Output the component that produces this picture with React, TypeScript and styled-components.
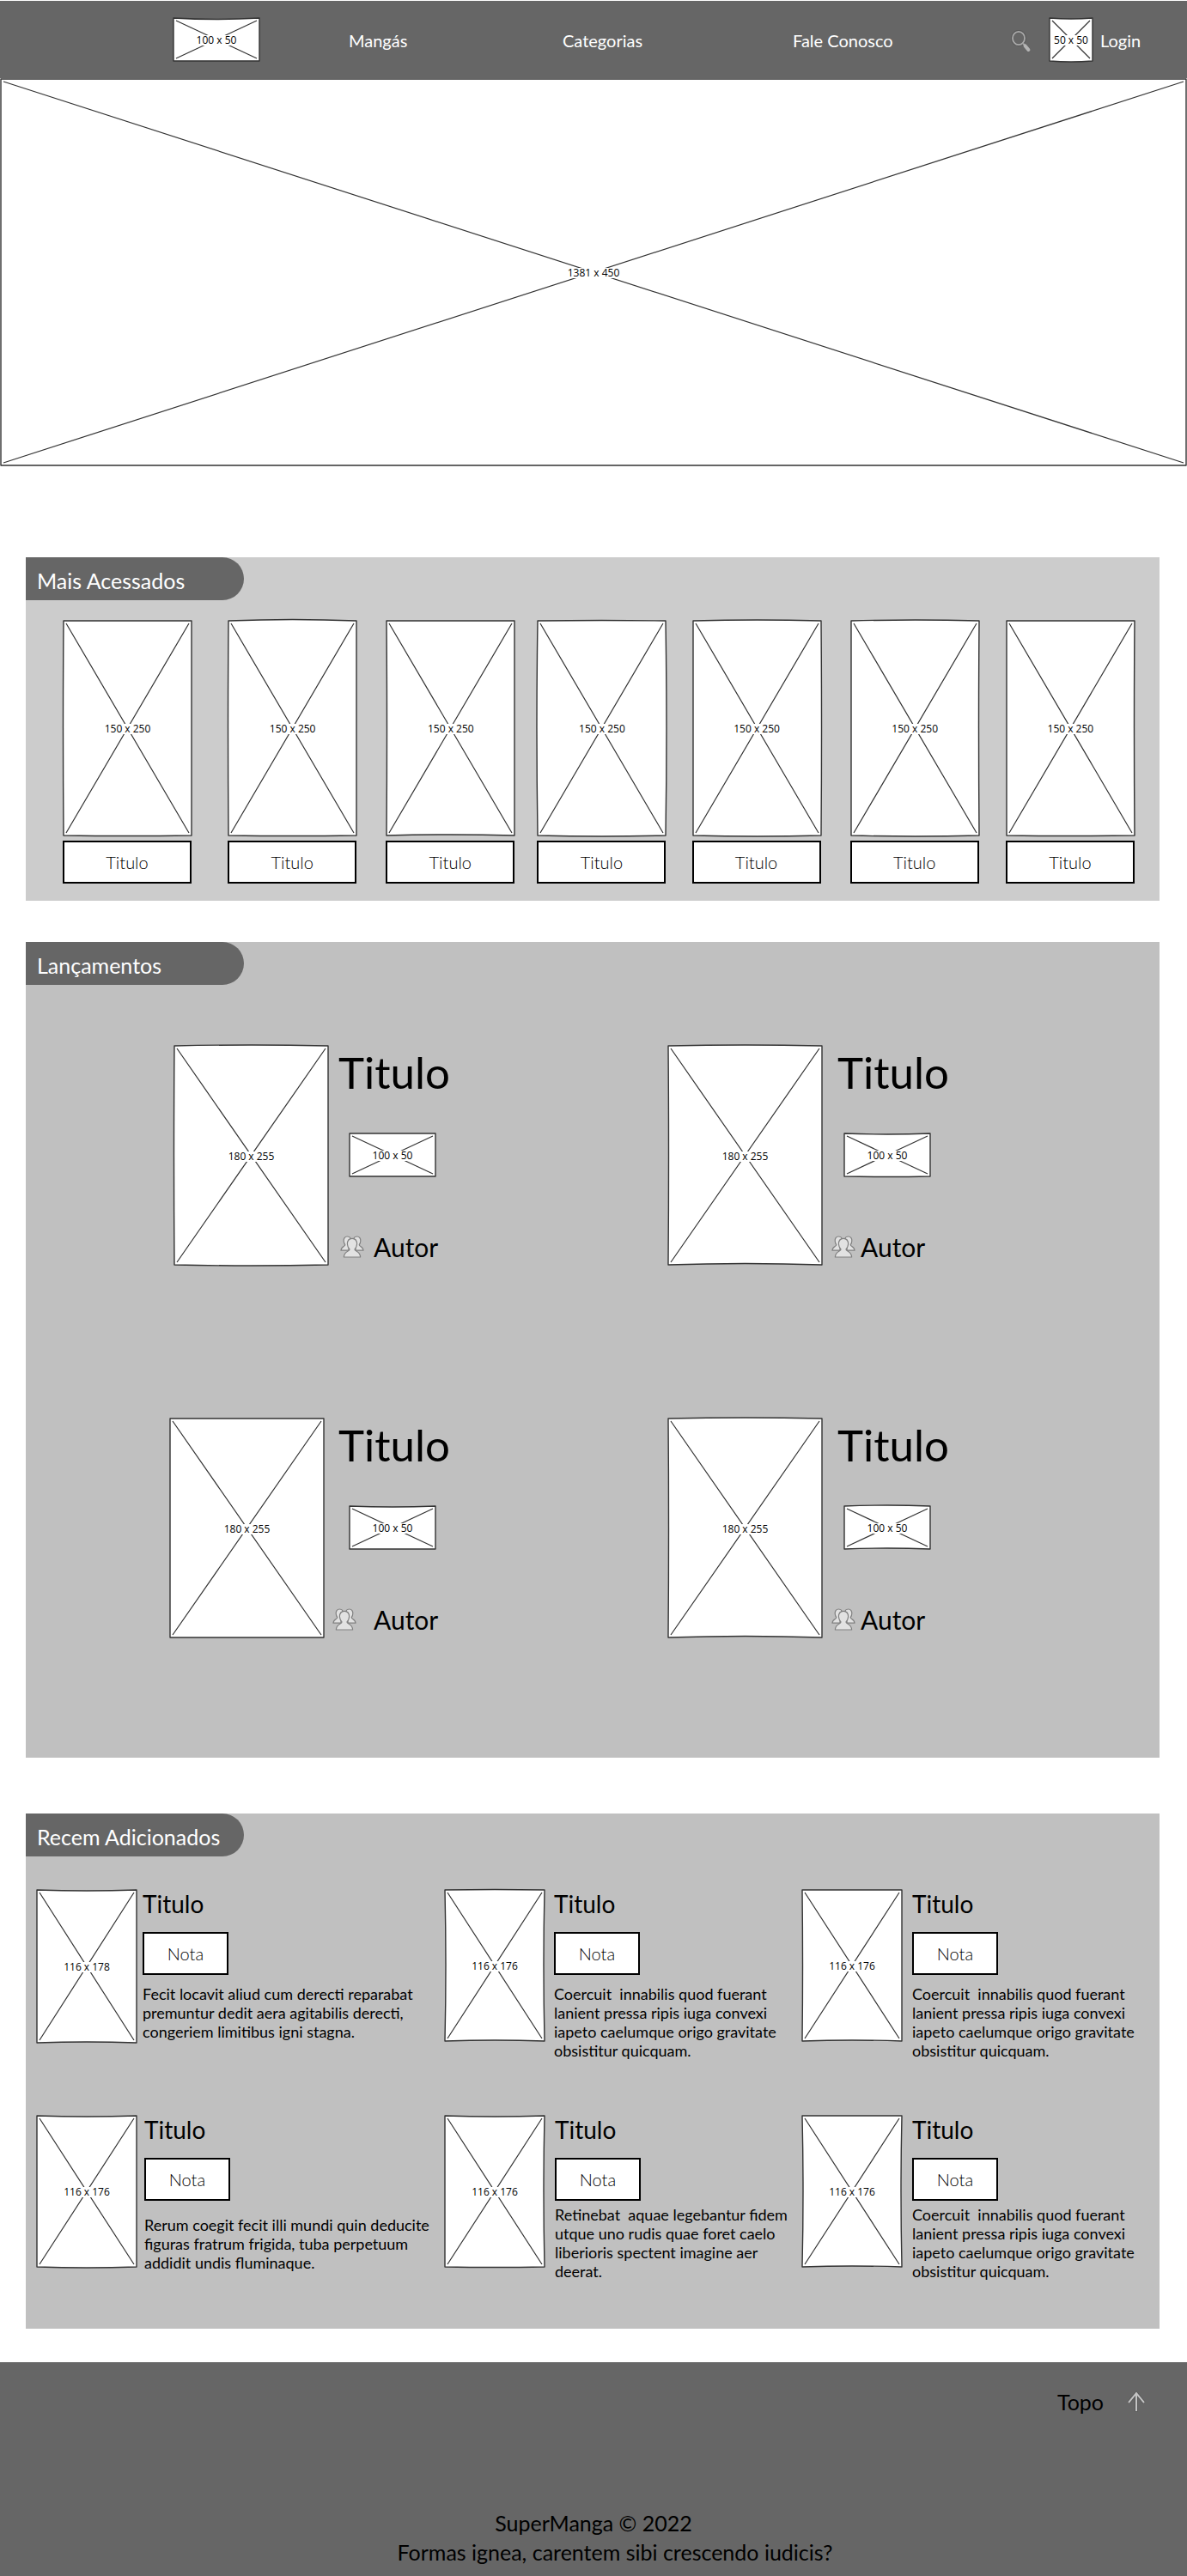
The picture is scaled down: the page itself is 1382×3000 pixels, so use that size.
import React from "react";
import styled, { createGlobalStyle } from "styled-components";

const GlobalStyle = createGlobalStyle`
  *, *::before, *::after { box-sizing: border-box; }
  body {
    margin: 0;
    background: #fff;
    color: #000;
    font-family: Lato, "Open Sans", sans-serif;
  }
  h1, h2, h3, p { margin: 0; font-weight: 400; }
  a { color: inherit; text-decoration: none; }
`;

/* ---------- image placeholder ---------- */

type Bow = [number, number, number, number];

const Frame = styled.div<{ $w?: number; $h: number }>`
  position: relative;
  flex: none;
  width: ${(p) => (p.$w ? `${p.$w}px` : "100%")};
  height: ${(p) => p.$h}px;
`;

const Sketch = styled.svg`
  display: block;
  width: 100%;
  height: 100%;
  overflow: visible;

  path { vector-effect: non-scaling-stroke; }
`;

const FrameLabel = styled.span`
  position: absolute;
  inset: 0;
  display: flex;
  align-items: center;
  justify-content: center;
  padding-top: 2px;

  span {
    background: #fff;
    font-family: "Open Sans", "Noto Sans", sans-serif;
    font-size: 12px;
    line-height: 12px;
    white-space: nowrap;
  }
`;

function Placeholder({
  w,
  h,
  label,
  fluid,
  bow = [0, 0, 0, 0],
}: {
  w: number;
  h: number;
  label: string;
  fluid?: boolean;
  bow?: Bow;
}) {
  const [t, r, b, l] = bow;
  const x1 = w - 1;
  const y1 = h - 1;
  const outline =
    `M1 1Q${w / 2} ${1 + t} ${x1} 1Q${x1 + r} ${h / 2} ${x1} ${y1}` +
    `Q${w / 2} ${y1 + b} 1 ${y1}Q${1 + l} ${h / 2} 1 1Z`;
  return (
    <Frame $w={fluid ? undefined : w} $h={h} role="img" aria-label={label}>
      <Sketch viewBox={`0 0 ${w} ${h}`} preserveAspectRatio="none" aria-hidden="true">
        <path d={outline} fill="#fff" stroke="#333" strokeWidth="1.4" strokeLinejoin="round" />
        <path
          d={`M4 4L${w - 4} ${h - 4}M${w - 4} 4L4 ${h - 4}`}
          fill="none"
          stroke="#333"
          strokeWidth="1.2"
        />
      </Sketch>
      <FrameLabel>
        <span>{label}</span>
      </FrameLabel>
    </Frame>
  );
}

/* ---------- icons ---------- */

const SearchIcon = () => (
  <svg width="24" height="26" viewBox="0 0 24 26" fill="none" aria-hidden="true">
    <ellipse cx="9" cy="9.5" rx="7.4" ry="8" stroke="#4d4d4d" strokeWidth="3.4" opacity=".5" />
    <ellipse cx="9" cy="9.5" rx="7" ry="7.6" stroke="#a9a9a9" strokeWidth="1.8" />
    <path d="M14.2 15.6l2 2.2" stroke="#a9a9a9" strokeWidth="2" />
    <path d="M16.6 18.4l3.8 4.6" stroke="#b4b4b4" strokeWidth="4" strokeLinecap="round" />
  </svg>
);

const GroupIcon = () => (
  <svg
    width="28"
    height="26"
    viewBox="0 0 28 26"
    fill="#e2e2e2"
    stroke="#808080"
    strokeWidth="1.2"
    strokeLinejoin="round"
    aria-hidden="true"
  >
    <path d="M8.4 1C5.4 1 4 3.4 4.2 6.2c.1 2 .8 3.4 1.6 4.6C5.8 12.6 1.2 12.6 1 17.2h9V5l2.4-1.6C11.7 1.9 10.4 1 8.4 1z" />
    <path d="M19.600 1c3 0 4.400 2.400 4.200 5.200-.1 2-.8 3.400-1.600 4.600 0 1.800 4.600 1.800 4.800 6.400h-9V5l-2.400-1.600C16.300 1.900 17.600 1 19.600 1z" />
    <path d="M14 3.400c-3.800 0-5.800 2.800-5.600 6.400.1 2.700 1.300 4.700 2.600 6.200.2 2.400-6.400 1.600-6.600 9h19.200c-.2-7.400-6.800-6.600-6.600-9 1.300-1.500 2.500-3.500 2.600-6.200.2-3.600-1.800-6.400-5.600-6.400z" />
  </svg>
);

const ArrowUpIcon = () => (
  <svg width="22" height="26" viewBox="0 0 22 26" fill="none" aria-hidden="true">
    <path d="M11 2.500V24.500M2 14L11 3l9 11" stroke="#4a4a4a" strokeWidth="3.600" opacity=".5" />
    <path d="M11 3V24M2 14L11 3l9 11" stroke="#c4c4c4" strokeWidth="2" />
  </svg>
);

/* ---------- header ---------- */

const Header = styled.header`
  display: grid;
  grid-template-columns: 201fr 205fr 249fr 268fr 254fr 205px;
  align-items: center;
  height: 91px;
  border-top: 1px solid #fff;
  background: #666;
  color: #fff;
`;

const LogoLink = styled.a`
  grid-column: 2;
  color: #000;
`;

const Nav = styled.nav`
  display: contents;
`;

const NavLink = styled.a`
  padding-top: 2px;
  font-size: 20px;
  line-height: 24px;
  white-space: nowrap;
`;

const Tools = styled.div`
  display: flex;
  align-items: center;
`;

const IconButton = styled.button`
  display: flex;
  margin: 4px 20px 0 0;
  padding: 0;
  border: 0;
  background: none;
  cursor: pointer;
`;

const LoginLink = styled(NavLink)`
  display: flex;
  align-items: center;
  gap: 8px;
  padding: 0;

  > div { color: #000; }
  > span { padding-top: 2px; }
`;

/* ---------- sections ---------- */

const Main = styled.main`
  padding-bottom: 39px;
`;

const Section = styled.section<{ $top: number; $light?: boolean }>`
  margin: ${(p) => p.$top}px 32px 0 30px;
  background: ${(p) => (p.$light ? "#ccc" : "#c0c0c0")};
`;

const SectionTab = styled.h2`
  width: 254px;
  height: 50px;
  padding-left: 13px;
  border-radius: 0 25px 25px 0;
  background: #666;
  color: #fff;
  font-size: 25px;
  line-height: 54px;
`;

const Shelf = styled.div`
  display: grid;
  grid-template-columns: 192fr 184fr 176fr 180fr 184fr 181fr 179fr;
  padding: 23px 0 20px 43px;
`;

const ShelfItem = styled.article`
  display: flex;
  flex-direction: column;
  gap: 5px;
`;

const Plate = styled.div<{ $w: number }>`
  width: ${(p) => p.$w}px;
  height: 50px;
  border: 2px solid #000;
  background: #fff;
  font-size: 20px;
  font-weight: 300;
  line-height: 46px;
  text-align: center;
`;

const Releases = styled.div`
  display: grid;
  grid-template-columns: 496fr 581fr 243fr;
  row-gap: 177px;
  padding: 70px 0 139px;
`;

const Release = styled.article<{ $gap: number; $column: number }>`
  grid-column: ${(p) => p.$column};
  display: flex;
  justify-content: flex-end;
  gap: ${(p) => p.$gap}px;
`;

const ReleaseInfo = styled.div`
  width: 139px;
  padding-top: 2px;
`;

const ReleaseTitle = styled.h3`
  padding-left: 7px;
  font-size: 51px;
  line-height: 60px;
`;

const Badge = styled.div<{ $inset: number }>`
  margin: 40px 0 63px;
  padding-left: ${(p) => p.$inset}px;
`;

const Author = styled.div<{ $inset: number; $gap: number }>`
  display: flex;
  align-items: center;
  gap: ${(p) => p.$gap}px;
  padding-left: ${(p) => p.$inset}px;
  font-size: 30px;
  line-height: 36px;

  svg { flex: none; }
`;

const Recents = styled.div`
  display: grid;
  grid-template-columns: 475fr 416fr 417fr;
  row-gap: 64px;
  padding: 38px 0 56px 12px;
`;

const Recent = styled.article<{ $gap: number }>`
  display: flex;
  align-items: flex-start;
  gap: ${(p) => p.$gap}px;
`;

const RecentTitle = styled.h3`
  margin-bottom: 16px;
  font-size: 28px;
  line-height: 34px;
`;

const Summary = styled.p<{ $top: number; $w: number }>`
  max-width: ${(p) => p.$w}px;
  margin-top: ${(p) => p.$top}px;
  font-size: 18px;
  line-height: 22px;
  white-space: pre-wrap;
`;

/* ---------- footer ---------- */

const Footer = styled.footer`
  padding: 29px 48px 11px;
  background: #666;
  font-size: 25px;
  line-height: 34px;
`;

const TopLink = styled.a`
  display: flex;
  align-items: center;
  justify-content: flex-end;
  gap: 27px;
  margin-bottom: 107px;
`;

const Legal = styled.div`
  text-align: center;

  p + p { padding-left: 50px; }
`;

/* ---------- data ---------- */

const shelf: Bow[] = [
  [0, 0, 1, -1],
  [-3, 0, 1, -1],
  [0, 0, -2, 1],
  [-1, 2, 2, -2],
  [-2, 1, 2, 0],
  [-2, -1, 2, 0],
  [0, -1, 1, 0],
];

const releases = [
  { gap: 4, column: 1, badge: 19, inset: 9, authorGap: 11, bow: [-2, 0, 2, -1] as Bow, badgeBow: [0, 0, 0, 0] as Bow },
  { gap: 10, column: 2, badge: 14, inset: 0, authorGap: 6, bow: [-2, 0, -3, 1] as Bow, badgeBow: [2, 0, 1, 0] as Bow },
  { gap: 9, column: 1, badge: 19, inset: 0, authorGap: 20, bow: [0, 0, 0, 0] as Bow, badgeBow: [2, 0, 0, 0] as Bow },
  { gap: 10, column: 2, badge: 14, inset: 0, authorGap: 6, bow: [-2, 0, -3, 1] as Bow, badgeBow: [-2, 0, -2, 0] as Bow },
];

const coercuit =
  "Coercuit  innabilis quod fuerant lanient pressa ripis iuga convexi iapeto caelumque origo gravitate obsistitur quicquam.";

const recents = [
  {
    h: 180, label: "116 x 178", gap: 6, top: 11, width: 330, bow: [2, 0, -2, 0] as Bow,
    text: "Fecit locavit aliud cum derecti reparabat premuntur dedit aera agitabilis derecti, congeriem limitibus igni stagna.",
  },
  { h: 178, label: "116 x 176", gap: 10, top: 11, width: 272, bow: [-1, -2, -2, 2] as Bow, text: coercuit },
  { h: 178, label: "116 x 176", gap: 11, top: 11, width: 272, bow: [0, 0, -2, 1] as Bow, text: coercuit },
  {
    h: 178, label: "116 x 176", gap: 8, top: 17, width: 336, bow: [2, 0, 2, 0] as Bow,
    text: "Rerum coegit fecit illi mundi quin deducite figuras fratrum frigida, tuba perpetuum addidit undis fluminaque.",
  },
  {
    h: 178, label: "116 x 176", gap: 11, top: 5, width: 272, bow: [2, -2, 1, 0] as Bow,
    text: "Retinebat  aquae legebantur fidem utque uno rudis quae foret caelo liberioris spectent imagine aer deerat.",
  },
  { h: 178, label: "116 x 176", gap: 11, top: 5, width: 272, bow: [0, -2, -2, 2] as Bow, text: coercuit },
];

export default function App() {
  return (
    <>
      <GlobalStyle />
      <Header id="top">
        <LogoLink href="#top">
          <Placeholder w={102} h={52} label="100 x 50" bow={[3, 0, 0, 0]} />
        </LogoLink>
        <Nav>
          <NavLink href="#mangas">Mangás</NavLink>
          <NavLink href="#categorias">Categorias</NavLink>
          <NavLink href="#contato">Fale Conosco</NavLink>
        </Nav>
        <Tools>
          <IconButton type="button" aria-label="Buscar">
            <SearchIcon />
          </IconButton>
          <LoginLink href="#login">
            <Placeholder w={52} h={52} label="50 x 50" bow={[2, 0, 2, 0]} />
            <span>Login</span>
          </LoginLink>
        </Tools>
      </Header>

      <Main>
        <Placeholder w={1382} h={452} label="1381 x 450" fluid />

        <Section $top={106} $light>
          <SectionTab>Mais Acessados</SectionTab>
          <Shelf>
            {shelf.map((bow, i) => (
              <ShelfItem key={i}>
                <Placeholder w={151} h={252} label="150 x 250" bow={bow} />
                <Plate $w={150}>Titulo</Plate>
              </ShelfItem>
            ))}
          </Shelf>
        </Section>

        <Section $top={48}>
          <SectionTab>Lançamentos</SectionTab>
          <Releases>
            {releases.map((r, i) => (
              <Release key={i} $gap={r.gap} $column={r.column}>
                <Placeholder w={181} h={257} label="180 x 255" bow={r.bow} />
                <ReleaseInfo>
                  <ReleaseTitle>Titulo</ReleaseTitle>
                  <Badge $inset={r.badge}>
                    <Placeholder w={102} h={52} label="100 x 50" bow={r.badgeBow} />
                  </Badge>
                  <Author $inset={r.inset} $gap={r.authorGap}>
                    <GroupIcon />
                    Autor
                  </Author>
                </ReleaseInfo>
              </Release>
            ))}
          </Releases>
        </Section>

        <Section $top={65}>
          <SectionTab>Recem Adicionados</SectionTab>
          <Recents>
            {recents.map((r, i) => (
              <Recent key={i} $gap={r.gap}>
                <Placeholder w={118} h={r.h} label={r.label} bow={r.bow} />
                <div>
                  <RecentTitle>Titulo</RecentTitle>
                  <Plate $w={100}>Nota</Plate>
                  <Summary $top={r.top} $w={r.width}>
                    {r.text}
                  </Summary>
                </div>
              </Recent>
            ))}
          </Recents>
        </Section>
      </Main>

      <Footer>
        <TopLink href="#top">
          Topo
          <ArrowUpIcon />
        </TopLink>
        <Legal>
          <p>SuperManga © 2022</p>
          <p>Formas ignea, carentem sibi crescendo iudicis?</p>
        </Legal>
      </Footer>
    </>
  );
}
